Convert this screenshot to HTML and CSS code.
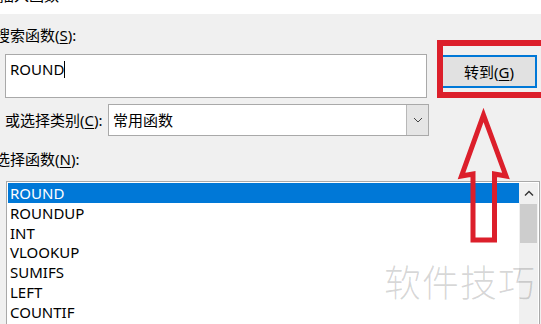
FILE: index.html
```html
<!DOCTYPE html>
<html lang="zh-CN">
<head>
  <meta charset="UTF-8" />
  <meta name="viewport" content="width=device-width, initial-scale=1.0"/>
  <title>插入函数</title>
  <link rel="stylesheet" href="styles.css">
</head>
<body>

  <div class="titlebar"><span>插入函数</span></div>

  <div class="dialog">
    <div class="label cut">搜索函数(<u>S</u>):</div>

    <div class="search-row">
      <div class="searchbox">ROUND<span class="caret"></span></div>
      <button class="goto">转到(<u>G</u>)</button>
    </div>

    <div class="category-row">
      <span class="label">或选择类别(<u>C</u>):</span>
      <div class="select">
        <span class="select-value">常用函数</span>
        <span class="select-btn">
          <svg width="10" height="6" viewBox="0 0 10 6"><path d="M1 1 L5 5 L9 1" fill="none" stroke="#444" stroke-width="1"/></svg>
        </span>
      </div>
    </div>

    <div class="label cut list-label">选择函数(<u>N</u>):</div>

    <div class="listbox">
      <ul class="items">
        <li class="selected">ROUND</li>
        <li>ROUNDUP</li>
        <li>INT</li>
        <li>VLOOKUP</li>
        <li>SUMIFS</li>
        <li>LEFT</li>
        <li>COUNTIF</li>
      </ul>
      <div class="scrollbar">
        <div class="scroll-up">
          <svg width="10" height="6" viewBox="0 0 10 6"><path d="M1 5.5 L5 1.5 L9 5.5" fill="none" stroke="#333" stroke-width="1.4"/></svg>
        </div>
        <div class="thumb"></div>
      </div>
    </div>
  </div>

  <!-- annotation drawn over the dialog -->
  <div class="highlight"></div>
  <svg class="arrow" width="541" height="324" viewBox="0 0 541 324">
    <path d="M483.5 115 L506 176 L494.5 174 L494.5 240 L473 240 L473 174 L461.5 176 Z"
          fill="none" stroke="#dc1f2b" stroke-width="5" stroke-linejoin="miter"/>
  </svg>

  <div class="watermark">软件技巧</div>

</body>
</html>
```

FILE: styles.css
```css
body {
  margin: 0;
  width: 541px;
  height: 324px;
  overflow: hidden;
  background: #f0f0f0;
  font-family: "Noto Sans", "Noto Sans CJK SC", sans-serif;
  font-size: 15px;
  color: #000;
  position: relative;
}
u {
  text-decoration-thickness: 1px;
  text-underline-offset: 2px;
}
.titlebar {
  height: 14px;
  background: #fff;
  overflow: hidden;
}
.titlebar span {
  display: block;
  margin: -15px 0 0 -1px;
  line-height: 20px;
  color: #000;
}
.dialog {
  padding-left: 5px;
}
.label {
  line-height: 20px;
  white-space: nowrap;
}
/* labels whose first glyph runs off the left edge */
.cut {
  margin-left: -10px;
}
.dialog > .label.cut:first-child {
  margin-top: 11px;
}
.search-row {
  display: flex;
  align-items: flex-start;
  margin-top: 9px;
}
.searchbox {
  width: 422px;
  height: 44px;
  background: #fff;
  border: 1px solid #a9a9a9;
  padding: 4px 0 0 4px;
  box-sizing: border-box;
  font-size: 15px;
  line-height: 20px;
}
.caret {
  display: inline-block;
  width: 1px;
  height: 17px;
  background: #000;
  vertical-align: -3px;
}
.goto {
  margin: 1px 0 0 14px;
  width: 96px;
  height: 33px;
  background: #e1e1e1;
  border: 2px solid #0078d7;
  font-family: inherit;
  font-size: 15px;
  padding: 0;
  color: #000;
}
.category-row {
  display: flex;
  align-items: center;
  margin-top: 6px;
  height: 32px;
}
.category-row .label {
  width: 103px;
}
.select {
  display: flex;
  width: 321px;
  height: 32px;
  background: #fff;
  border: 1px solid #a9a9a9;
  box-sizing: border-box;
}
.select-value {
  flex: 1;
  padding-left: 4px;
  line-height: 30px;
}
.select-btn {
  width: 21px;
  background: #e5e5e5;
  border-left: 1px solid #b8b8b8;
  display: flex;
  align-items: center;
  justify-content: center;
}
.list-label {
  margin-top: 13px;
}
.listbox {
  display: flex;
  margin: 12px 0 0 1px;
  width: 534px;
  height: 160px;
  background: #fff;
  border: 1px solid #a9a9a9;
  box-sizing: border-box;
  padding: 1px 1px 0 1px;
}
.items {
  flex: 1;
  list-style: none;
  margin: 0;
  padding: 0;
}
.items li {
  height: 19.8px;
  line-height: 20px;
  padding-left: 2px;
  font-size: 15px;
}
.items li.selected {
  background: #0078d7;
  color: #fff;
}
.scrollbar {
  width: 19px;
  background: #f0f0f0;
}
.scroll-up {
  height: 20px;
  display: flex;
  align-items: center;
  justify-content: center;
}
.thumb {
  margin: 1px 1px 0 1px;
  height: 39px;
  background: #cdcdcd;
}
.highlight {
  position: absolute;
  left: 437px;
  top: 40px;
  width: 110px;
  height: 58px;
  border: 6px solid #dc1f2b;
  box-sizing: border-box;
}
.arrow {
  position: absolute;
  left: 0;
  top: 0;
  pointer-events: none;
}
.watermark {
  position: absolute;
  left: 384px;
  top: 256px;
  font-family: "Noto Sans CJK SC", sans-serif;
  font-weight: 300;
  font-size: 37px;
  letter-spacing: 1px;
  line-height: 50px;
  color: rgba(0, 0, 0, 0.16);
}
```
